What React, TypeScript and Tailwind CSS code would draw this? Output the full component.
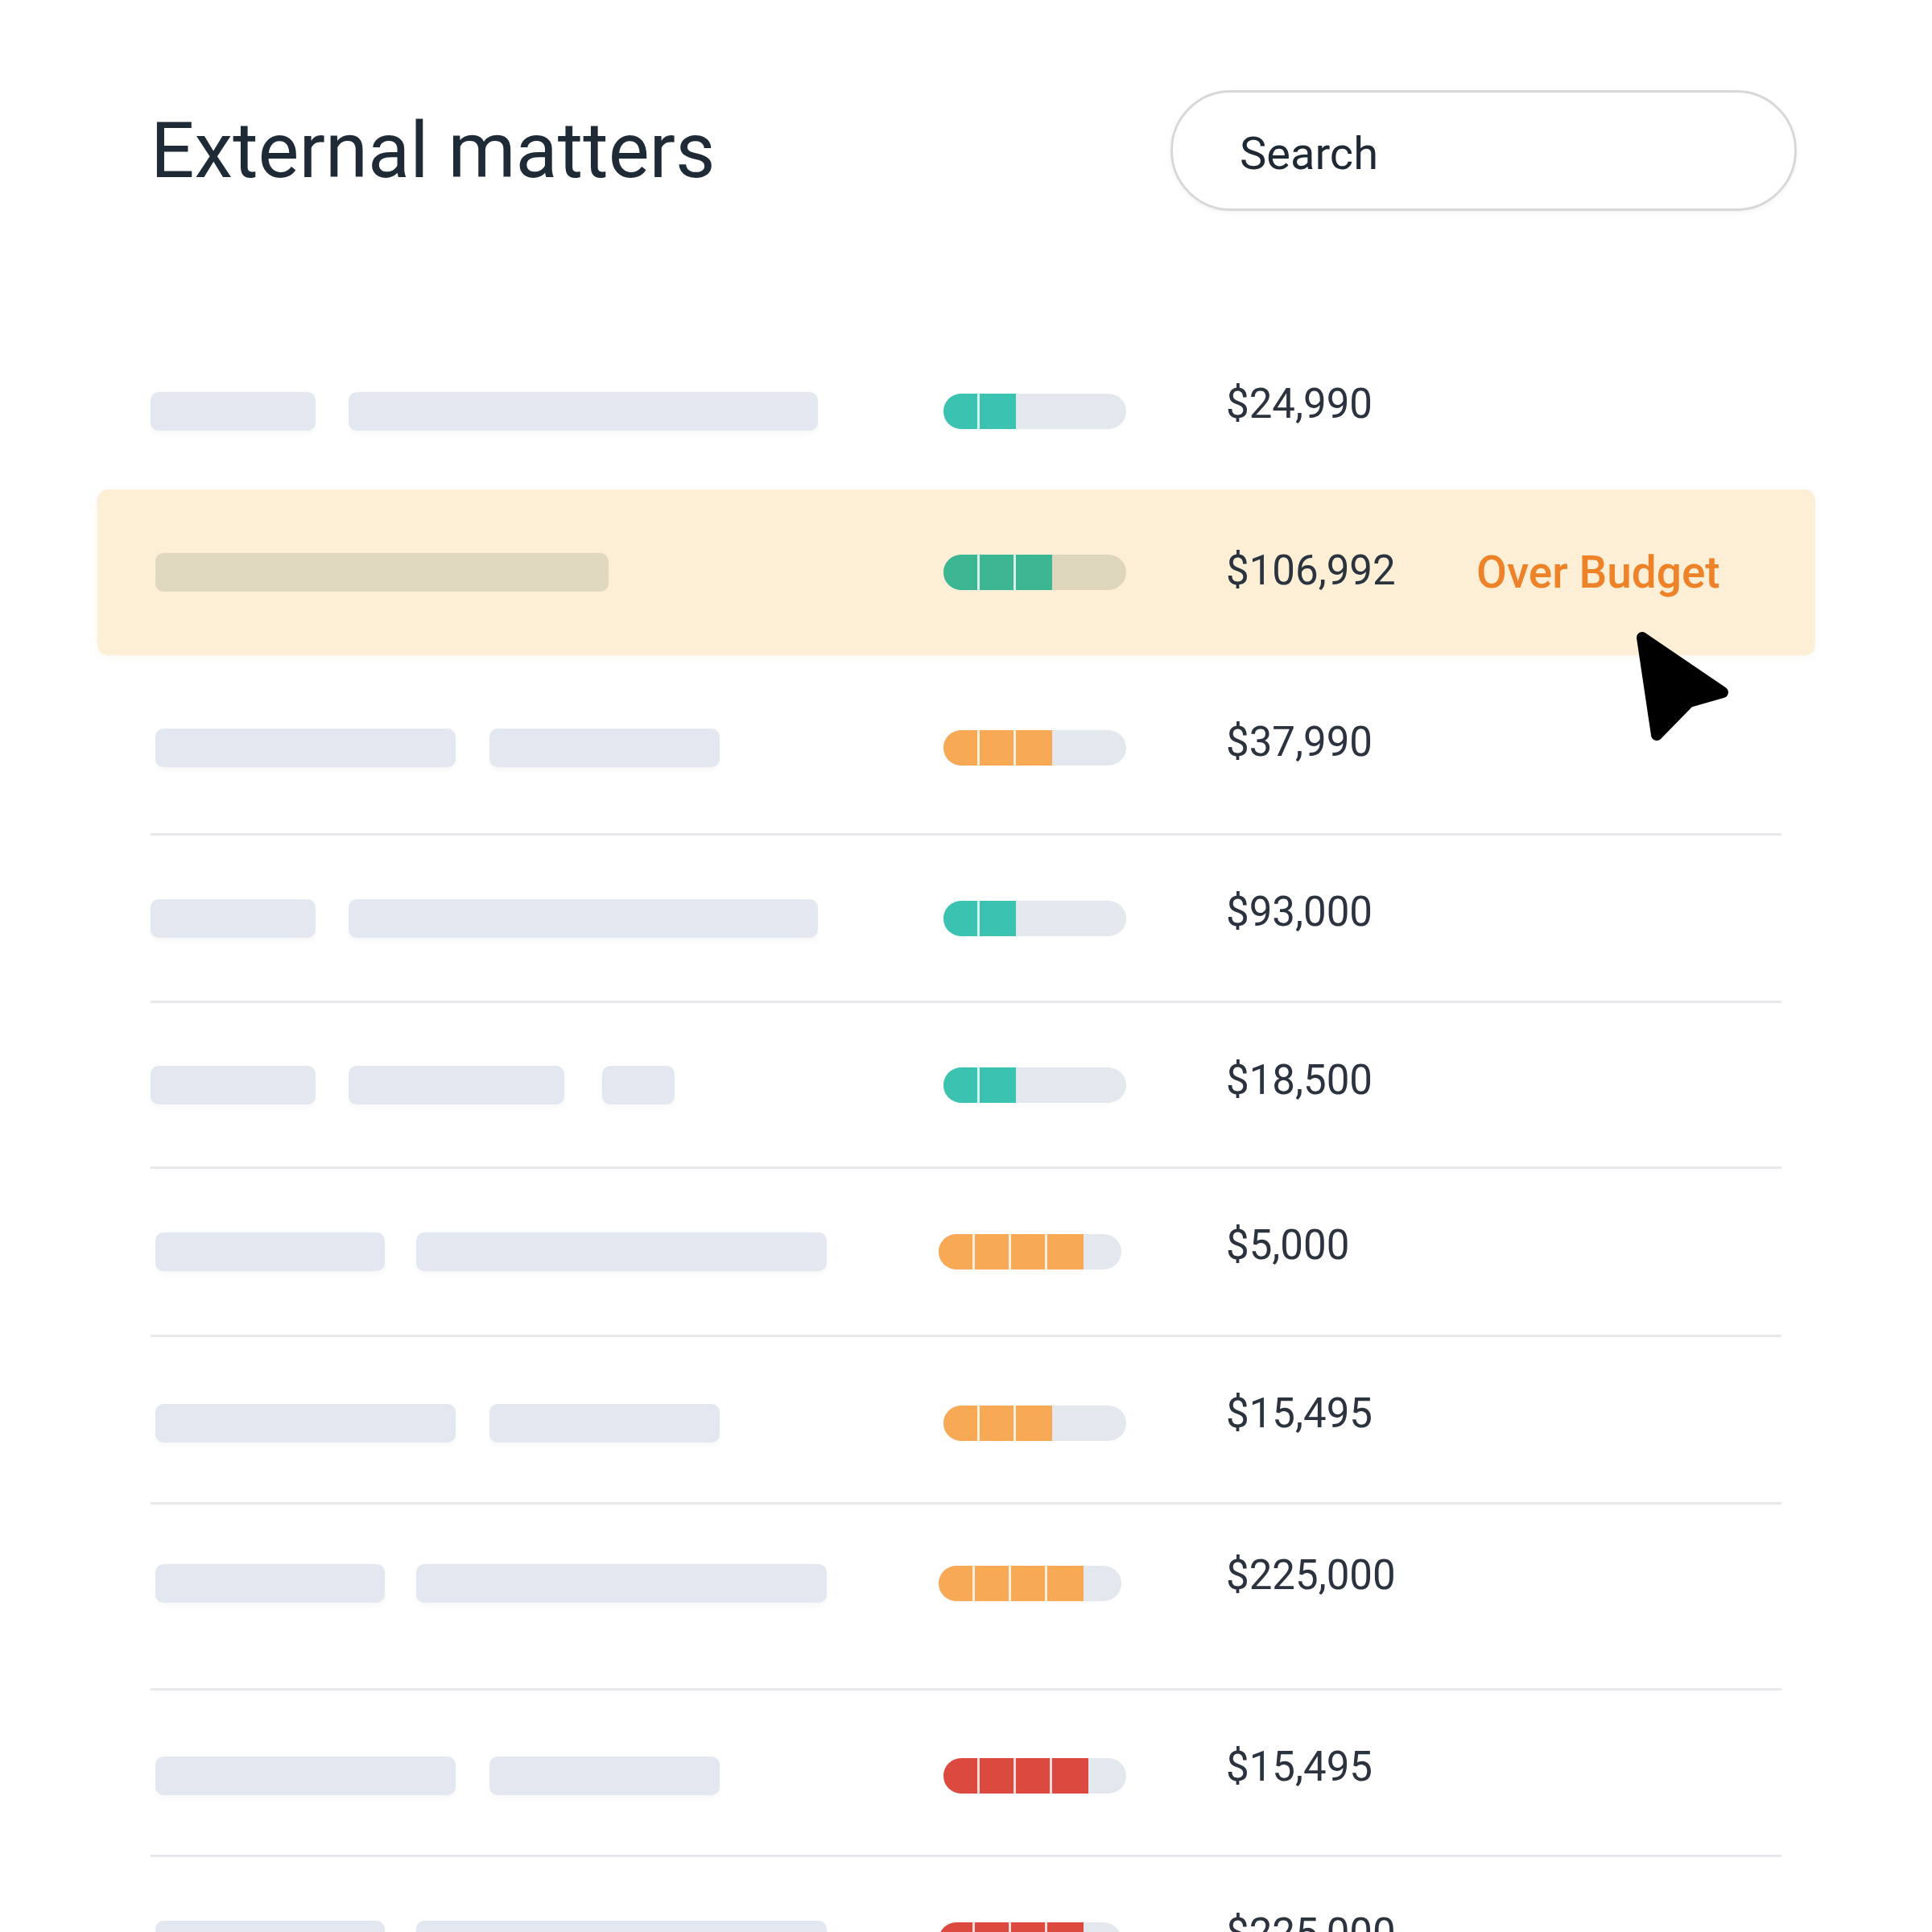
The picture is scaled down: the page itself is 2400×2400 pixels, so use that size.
import React from 'react';

type Tone = 'teal' | 'green' | 'orange' | 'red';

interface IRow {
    height: string;
    inner: string;
    divider: boolean;
    highlight?: boolean;
    bars: string[];
    barsOffset: string;
    pillOffset: string;
    amountOffset: string;
    filled: number;
    tone: Tone;
    amount: string;
}

const toneClass: Record<Tone, string> = {
    teal: 'bg-[#3cc2b1]',
    green: 'bg-[#3bb592]',
    orange: 'bg-[#f7a955]',
    red: 'bg-[#dc4a3f]',
};

const rows: IRow[] = [
    {
        height: 'h-[194px]',
        inner: '',
        divider: false,
        bars: ['w-[205px]', 'w-[583px] ml-[41px]'],
        barsOffset: 'pl-0',
        pillOffset: 'ml-0',
        amountOffset: 'pb-[20px]',
        filled: 2,
        tone: 'teal',
        amount: '$24,990',
    },
    {
        height: 'h-[206px]',
        inner: '',
        divider: false,
        highlight: true,
        bars: ['w-[563px]'],
        barsOffset: 'pl-[6px]',
        pillOffset: 'ml-0',
        amountOffset: 'pb-[6px]',
        filled: 3,
        tone: 'green',
        amount: '$106,992',
    },
    {
        height: 'h-[221px]',
        inner: 'pt-[8px]',
        divider: false,
        bars: ['w-[373px]', 'w-[286px] ml-[42px]'],
        barsOffset: 'pl-[6px]',
        pillOffset: 'ml-0',
        amountOffset: 'pb-[14px]',
        filled: 3,
        tone: 'orange',
        amount: '$37,990',
    },
    {
        height: 'h-[208px]',
        inner: '',
        divider: true,
        bars: ['w-[205px]', 'w-[583px] ml-[41px]'],
        barsOffset: 'pl-0',
        pillOffset: 'ml-0',
        amountOffset: 'pb-[16px]',
        filled: 2,
        tone: 'teal',
        amount: '$93,000',
    },
    {
        height: 'h-[206px]',
        inner: '',
        divider: true,
        bars: ['w-[205px]', 'w-[268px] ml-[41px]', 'w-[90px] ml-[47px]'],
        barsOffset: 'pl-0',
        pillOffset: 'ml-0',
        amountOffset: 'pb-[12px]',
        filled: 2,
        tone: 'teal',
        amount: '$18,500',
    },
    {
        height: 'h-[209px]',
        inner: '',
        divider: true,
        bars: ['w-[285px]', 'w-[510px] ml-[39px]'],
        barsOffset: 'pl-[6px]',
        pillOffset: '-ml-[6px]',
        amountOffset: 'pb-[18px]',
        filled: 4,
        tone: 'orange',
        amount: '$5,000',
    },
    {
        height: 'h-[208px]',
        inner: 'pt-[8px]',
        divider: true,
        bars: ['w-[373px]', 'w-[286px] ml-[42px]'],
        barsOffset: 'pl-[6px]',
        pillOffset: 'ml-0',
        amountOffset: 'pb-[24px]',
        filled: 3,
        tone: 'orange',
        amount: '$15,495',
    },
    {
        height: 'h-[231px]',
        inner: 'pb-[32px]',
        divider: true,
        bars: ['w-[285px]', 'w-[510px] ml-[39px]'],
        barsOffset: 'pl-[6px]',
        pillOffset: '-ml-[6px]',
        amountOffset: 'pb-[22px]',
        filled: 4,
        tone: 'orange',
        amount: '$225,000',
    },
    {
        height: 'h-[207px]',
        inner: 'pt-[8px]',
        divider: true,
        bars: ['w-[373px]', 'w-[286px] ml-[42px]'],
        barsOffset: 'pl-[6px]',
        pillOffset: 'ml-0',
        amountOffset: 'pb-[24px]',
        filled: 4,
        tone: 'red',
        amount: '$15,495',
    },
    {
        height: 'h-[208px]',
        inner: '',
        divider: true,
        bars: ['w-[285px]', 'w-[510px] ml-[39px]'],
        barsOffset: 'pl-[6px]',
        pillOffset: '-ml-[6px]',
        amountOffset: 'pb-[16px]',
        filled: 4,
        tone: 'red',
        amount: '$225,000',
    },
];

function BudgetPill({ filled, tone, highlight }: { filled: number; tone: Tone; highlight?: boolean }) {
    return (
        <div
            className={`flex h-[44px] w-[227px] overflow-hidden rounded-full ${
                highlight ? 'bg-[#ded5bd]' : 'bg-[#e3e8ef]'
            }`}
        >
            {Array.from({ length: filled }).map((_, i) => (
                <div
                    key={i}
                    className={`h-full w-[45px] ${toneClass[tone]} ${
                        i < filled - 1 ? 'border-r-[3px] border-white/80' : ''
                    }`}
                />
            ))}
        </div>
    );
}

function MatterRow({ row }: { row: IRow }) {
    return (
        <div
            className={`${row.height} rounded-[14px] ${
                row.highlight ? 'bg-[#fcefd6] shadow-[0_2px_8px_rgba(180,140,60,0.08)]' : ''
            }`}
        >
            <div
                className={`ml-[66px] mr-[42px] flex h-full items-center ${row.inner} ${
                    row.divider ? 'border-t-[3px] border-[#e6e8ec]' : ''
                }`}
            >
                <div className={`flex w-[985px] ${row.barsOffset}`}>
                    {row.bars.map((bar, i) => (
                        <div
                            key={i}
                            className={`h-[48px] rounded-[10px] ${bar} ${
                                row.highlight
                                    ? 'bg-[#e0d8bf]'
                                    : 'bg-[#e3e8f0] shadow-[0_4px_6px_rgba(15,23,42,0.03)]'
                            }`}
                        />
                    ))}
                </div>
                <div className="w-[351px]">
                    <div className={row.pillOffset}>
                        <BudgetPill filled={row.filled} tone={row.tone} highlight={row.highlight} />
                    </div>
                </div>
                <div className={`w-[311px] text-[51px] leading-none text-[#2b333e] ${row.amountOffset}`}>
                    {row.amount}
                </div>
                {row.highlight && (
                    <div className="text-[55px] font-medium leading-none text-[#ee8228]">Over Budget</div>
                )}
            </div>
        </div>
    );
}

function Cursor() {
    return (
        <svg
            className="absolute left-[1990px] top-[760px] h-[180px] w-[200px]"
            viewBox="0 0 200 180"
            fill="none"
        >
            <path
                d="M50 32 L150 100 L108 112 L68 153 Z"
                fill="#000"
                stroke="#000"
                strokeWidth="14"
                strokeLinejoin="round"
            />
        </svg>
    );
}

export default function App() {
    return (
        <div className="relative h-[2400px] w-[2400px] overflow-hidden bg-white font-['Roboto',sans-serif]">
            <div className="flex items-center justify-between pl-[187px] pr-[168px] pt-[112px]">
                <h1 className="text-[96px] font-normal leading-none text-[#1f2a37]">External matters</h1>
                <div className="flex h-[150px] w-[778px] items-center rounded-full border-[3px] border-[#d8d8d8] bg-white pl-[83px] shadow-[0_2px_6px_rgba(0,0,0,0.05)]">
                    <span className="pt-[8px] text-[56px] leading-none text-[#1f2933]">Search</span>
                </div>
            </div>
            <div className="ml-[121px] mt-[152px] w-[2134px]">
                {rows.map((row, i) => (
                    <MatterRow key={i} row={row} />
                ))}
            </div>
            <Cursor />
        </div>
    );
}
